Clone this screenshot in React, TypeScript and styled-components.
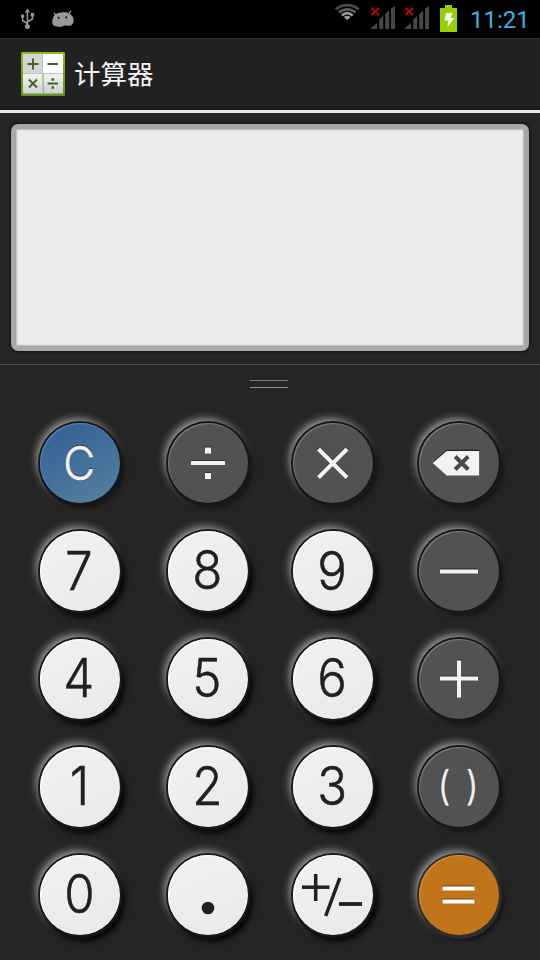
import React from 'react';
import styled, { createGlobalStyle, css } from 'styled-components';

const GlobalStyle = createGlobalStyle`
  * { box-sizing: border-box; }
  body { margin: 0; background: #252525; }
`;

const Screen = styled.div`
  width: 540px;
  height: 960px;
  overflow: hidden;
  display: flex;
  flex-direction: column;
  background: #252525;
  font-family: Roboto, "Noto Sans CJK SC", sans-serif;
`;

const StatusBar = styled.header`
  height: 38px;
  flex: none;
  background: #000;
  display: flex;
  justify-content: space-between;
`;

const StatusGroup = styled.div`
  display: flex;
  align-items: flex-start;
  svg { display: block; flex: none; }
`;

const Clock = styled.time`
  width: 80px;
  padding: 6px 0 0 10px;
  color: #33b5e5;
  font-size: 24px;
  line-height: 28px;
  white-space: nowrap;
`;

const TitleBar = styled.div`
  height: 75px;
  flex: none;
  display: flex;
  align-items: center;
  gap: 8px;
  padding: 0 20px 2px;
  background: #222;
  border-top: 1px solid #303030;
  border-bottom: 3px solid #e8ebe8;
  box-shadow: inset 0 -2px 2px #1a1a1a;
`;

const Title = styled.h1`
  margin: 0;
  padding-bottom: 1px;
  color: #f3f3f3;
  font: 400 26.5px/36px "Noto Sans CJK SC", sans-serif;
`;

const DisplayArea = styled.section`
  height: 251px;
  flex: none;
  padding: 11px 11px 12px;
`;

const Display = styled.div`
  height: 227px;
  border-radius: 7px;
  border: 4px solid #a5a8a6;
  border-bottom-color: #a6aba8;
  background: #e9ebec;
  box-shadow: inset 0 0 0 1px #a3a6a3, inset 0 0 0 2px #c5c8c2, inset 0 0 0 3px #dfe1df,
    0 0 2px 1px #111;
`;

const Drawer = styled.div`
  height: 45px;
  flex: none;
  border-top: 1px solid #4b4b4b;
  display: flex;
  justify-content: center;
  padding-top: 15px;
`;

const Grip = styled.div`
  width: 38px;
  height: 8px;
  margin-right: 2px;
  border-top: 1px solid #7b7b79;
  border-bottom: 1px solid #8c8e8a;
`;

const Keypad = styled.main`
  display: grid;
  grid-template-columns: 128px 128px 122px 130px;
  grid-auto-rows: 108px;
  place-items: center;
  padding: 0 16px;
`;

type Tone = 'digit' | 'operator' | 'clear' | 'equals';

const glow = '-3px -4px 8px 0 rgba(255, 255, 255, 0.6)';

const tones = {
  digit: css`
    background: linear-gradient(155deg, #f1f1f1, #e9e9e9);
    color: #202020;
    box-shadow: inset 1px 1px 1px #fff, 0 0 0 2px #191919, 1px 2px 1px 2px #111, 4px 5px 6px 1px #000, ${glow};
  `,
  operator: css`
    background: #525252;
    color: #f2f2f2;
    box-shadow: inset 1px 1px 1px #7c7c7c, 0 0 0 2px #161616, 1px 2px 1px 2px #1b1b1b,
      4px 4px 5px 1px rgba(0, 0, 0, 0.5), ${glow};
  `,
  clear: css`
    background: linear-gradient(150deg, #386596 20%, #55809f 95%);
    color: #f2f2f2;
    box-shadow: inset 1px 1px 1px #5482b2, 0 0 0 2px #161616, 1px 2px 1px 2px #181818,
      4px 4px 5px 1px rgba(0, 0, 0, 0.5), ${glow};
  `,
  equals: css`
    background: #c0751a;
    color: #fff;
    box-shadow: inset 1px 1px 1px #d58c3c, 0 0 0 2px #2e2e2e, 1px 2px 1px 2px #303030,
      4px 4px 5px 1px rgba(0, 0, 0, 0.6), ${glow};
  `,
};

const Key = styled.button<{ $tone: Tone }>`
  width: 80px;
  height: 80px;
  padding: 0;
  border: 0;
  border-radius: 50%;
  display: grid;
  place-items: center;
  ${({ $tone }) => tones[$tone]}
  svg { display: block; }
`;

const Label = styled.span<{ $size?: number; $rise?: number; $gap?: number; $raised?: boolean }>`
  font: 300 ${({ $size = 53 }) => $size}px/60px Inter, sans-serif;
  padding-right: 2px;
  padding-bottom: ${({ $rise = 2 }) => $rise}px;
  word-spacing: ${({ $gap = 0 }) => $gap}px;
  white-space: nowrap;
  transform: scaleX(0.93);
  -webkit-text-stroke: 0.5px currentColor;
  text-shadow: ${({ $raised }) => ($raised ? '0 -1px 1px #222' : 'none')};
`;

type Stroke = { d: string; w?: number };

const Glyph = ({ strokes, shade = '#2a2a2a', color = 'currentColor' }: { strokes: Stroke[]; shade?: string; color?: string }) => (
  <svg width="80" height="80" viewBox="0 1 80 80" fill="none">
    {shade !== 'none' && strokes.map((s, i) => (
      <path key={`s${i}`} d={s.d} stroke={shade} strokeWidth={s.w ?? 4} transform="translate(0 -1)" />
    ))}
    {strokes.map((s, i) => (
      <path key={i} d={s.d} stroke={color} strokeWidth={s.w ?? 4} />
    ))}
  </svg>
);

const Backspace = () => (
  <svg width="80" height="80" viewBox="-.7 1 80 80">
    <path d="M13 41 27 28.500H59.500V53H27Z" fill="#222" transform="translate(0 -.8)" />
    <path d="M13 41 27 29H59.500V53.500H27Z" fill="#f2f2f2" />
    <path d="m35.500 34.500 13 13m0-13-13 13" stroke="#4a4a4a" strokeWidth="4" />
  </svg>
);

const UsbIcon = () => (
  <svg width="52" height="38" viewBox="0 0 52 38" fill="none" stroke="#969696" strokeWidth="1.5">
    <path d="M27.400 26V11M27.400 23.500l-4.800-3V16M27.400 22l5-3V15" />
    <path d="m24.800 12.500 2.600-4 2.600 4Z" fill="#969696" stroke="none" />
    <circle cx="27.400" cy="26.500" r="2.500" fill="#969696" stroke="none" />
    <circle cx="22.600" cy="16" r="1.800" fill="#969696" stroke="none" />
    <path d="M30.700 13h3.500v3.500h-3.500z" fill="#969696" stroke="none" />
  </svg>
);

const DebugIcon = () => (
  <svg width="24" height="38" viewBox="52 0 24 38">
    <path d="M54 12.800 57 17M70.700 10.800 68.500 15" stroke="#999" strokeWidth="1.400" />
    <path d="M52.200 22c0-1.500.2-3 .9-4.300C54.300 14.500 57 12.900 61 12.500c3.500-.4 6.500-.2 8.500 1.300 2.500 1.500 4.200 3.700 4.200 6.500 0 3.500-2.200 5.500-5 5.500-1.800 0-2.700-.6-3.900-.3-1.300.4-2.200 1.300-5.300 1.300-1.500 0-2-.4-3.200-.4-2.500 0-4.100-1.600-4.100-4.400Z" fill="#999" />
    <circle cx="58.700" cy="17.800" r="1" fill="#111" />
    <circle cx="66.200" cy="17.300" r="1" fill="#111" />
  </svg>
);

const WifiIcon = () => (
  <svg width="32" height="38" viewBox="333 0 32 38" fill="none" strokeWidth="2.700">
    <path d="M335.800 9.300C342 3.700 352.500 3.700 358.700 9.300" stroke="#4a4a4a" />
    <path d="M339 12.500C343.500 8.300 351 8.300 355.500 12.500" stroke="#5c5c5c" />
    <path d="M341.900 15.600C345 12.400 349.500 12.400 352.600 15.600" stroke="#9a9a9a" />
    <path d="M343.800 17Q347.250 14.300 350.700 17L347.250 20.300Z" fill="#9a9a9a" />
  </svg>
);

const SignalIcon = () => (
  <svg width="34" height="38" viewBox="0 0 34 38">
    <path d="M6 29v-1l6-5v6ZM14.200 29v-9.500l4-3.500V29ZM20.200 29V14l4-3.500V29ZM26 29V8.500L30 6v23Z" fill="#474747" />
    <path d="m6.500 7.800 7.500 7.500m0-7.500-7.500 7.500" stroke="#ac0808" strokeWidth="2" />
  </svg>
);

const BatteryIcon = () => (
  <svg width="27" height="38" viewBox="433 0 27 38">
    <path d="M445 5h7v3h5v24h-17V8h5Z" fill="#98cf00" />
    <path d="M446 13h6.500l-2 5h3.800l-7 9.500 1.200-7h-4Z" fill="#fff" />
  </svg>
);

const AppIcon = () => (
  <svg width="46" height="46" viewBox="0 0 46 46" fill="none">
    <defs>
      <linearGradient id="rim" x1="0" y1="0" x2="0" y2="1">
        <stop stopColor="#97bb18" /><stop offset="1" stopColor="#5f9315" />
      </linearGradient>
      <linearGradient id="tile" x1="0" y1="0" x2="0" y2="1">
        <stop stopColor="#f3f3f3" /><stop offset="1" stopColor="#d0d1d3" />
      </linearGradient>
    </defs>
    <rect x="1" y="1" width="44" height="44" rx="1.500" fill="url(#rim)" />
    <path d="M3 3h20v19.500H3z" fill="#d5d6d8" />
    <path d="M23 3h20v19.500H23z" fill="#fff" />
    <path d="M3 23h19.500v19H3zM23.500 23H43v19H23.500z" fill="url(#tile)" />
    <path d="M3 42h40v1H3z" fill="#aaa" />
    <path d="M22.500 3v39M3 22.500h40" stroke="#bfc1c1" />
    <path d="M7.500 13h11M13 7.500v11M27.500 13H38M9 28.500l8 8m0-8-8 8M27.500 32.500H38" stroke="#3e6725" strokeWidth="2" />
    <path d="M31.500 27.200h2.600v2.600h-2.600zM31.500 35.200h2.600v2.600h-2.600z" fill="#3e6725" />
  </svg>
);

type KeySpec = { name: string; tone: Tone; face: React.ReactNode };

const digit = (n: string, rise?: number): KeySpec => ({ name: n, tone: 'digit', face: <Label $rise={rise}>{n}</Label> });

const keys: KeySpec[] = [
  { name: 'clear', tone: 'clear', face: <Label $size={47} $rise={1} $raised>C</Label> },
  { name: 'divide', tone: 'operator', face: <Glyph strokes={[{ d: 'M23 41h34' }, { d: 'M37 28.500h6', w: 6 }, { d: 'M37 54h6', w: 6 }]} /> },
  { name: 'multiply', tone: 'operator', face: <Glyph strokes={[{ d: 'm25.500 27 28.500 28.500M54 27 25.500 55.500' }]} /> },
  { name: 'delete', tone: 'operator', face: <Backspace /> },
  digit('7', 0), digit('8'), digit('9', 0),
  { name: 'minus', tone: 'operator', face: <Glyph strokes={[{ d: 'M21 41.500h38' }]} /> },
  digit('4'), digit('5'), digit('6'),
  { name: 'plus', tone: 'operator', face: <Glyph strokes={[{ d: 'M21 40.500h38' }, { d: 'M40 22.500v37' }]} /> },
  digit('1'), digit('2'), digit('3'),
  { name: 'parentheses', tone: 'operator', face: <Label $size={40} $rise={2} $gap={5} $raised>( )</Label> },
  digit('0'),
  { name: 'point', tone: 'digit', face: (
    <svg width="80" height="80" viewBox="0 1 80 80"><circle cx="40" cy="54" r="6.300" fill="#202020" /></svg>
  ) },
  { name: 'sign', tone: 'digit', face: (
    <Glyph shade="none" strokes={[
      { d: 'M9 33.200h27.500', w: 3.5 }, { d: 'M22.700 20v27', w: 3.5 },
      { d: 'M46.800 24 32.700 62', w: 3.5 }, { d: 'M46 50h23', w: 3.8 },
    ]} />
  ) },
  { name: 'equals', tone: 'equals', face: <Glyph shade="#754005" strokes={[{ d: 'M23.500 34.500h32' }, { d: 'M23.500 47.500h32' }]} /> },
];

export default function App() {
  return (
    <>
      <GlobalStyle />
      <Screen>
        <StatusBar>
          <StatusGroup><UsbIcon /><DebugIcon /></StatusGroup>
          <StatusGroup>
            <WifiIcon /><SignalIcon /><SignalIcon /><BatteryIcon />
            <Clock>11:21</Clock>
          </StatusGroup>
        </StatusBar>
        <TitleBar><AppIcon /><Title>计算器</Title></TitleBar>
        <DisplayArea><Display /></DisplayArea>
        <Drawer><Grip /></Drawer>
        <Keypad>
          {keys.map((k) => (
            <Key key={k.name} $tone={k.tone} aria-label={k.name}>{k.face}</Key>
          ))}
        </Keypad>
      </Screen>
    </>
  );
}
